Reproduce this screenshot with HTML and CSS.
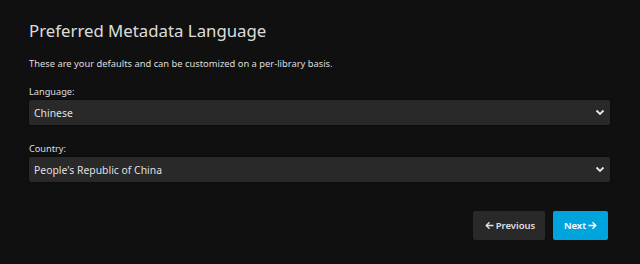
FILE: index.html
```html
<!DOCTYPE html>
<html lang="en">
<head>
  <meta charset="UTF-8" />
  <meta name="viewport" content="width=device-width, initial-scale=1.0"/>
  <title>Preferred Metadata Language</title>
  <link rel="stylesheet" href="styles.css">
</head>
<body>
  <!-- Wizard step: metadata language -->
  <div class="wizard-page">
    <h1 class="page-title">Preferred Metadata Language</h1>
    <p class="field-help">These are your defaults and can be customized on a per-library basis.</p>

    <div class="field">
      <label for="language">Language:</label>
      <div class="select-wrap">
        <select id="language" name="language">
          <option>Chinese</option>
          <option>English</option>
        </select>
        <span class="select-arrow">
          <svg width="10" height="7" viewBox="0 0 10 7"><path d="M1.5 1.5 5 5 8.5 1.5" fill="none" stroke="#e6e6e6" stroke-width="1.8"/></svg>
        </span>
      </div>
    </div>

    <div class="field">
      <label for="country">Country:</label>
      <div class="select-wrap">
        <select id="country" name="country">
          <option>People's Republic of China</option>
          <option>United States</option>
        </select>
        <span class="select-arrow">
          <svg width="10" height="7" viewBox="0 0 10 7"><path d="M1.5 1.5 5 5 8.5 1.5" fill="none" stroke="#e6e6e6" stroke-width="1.8"/></svg>
        </span>
      </div>
    </div>

    <div class="button-group">
      <button class="btn btn-prev">
        <svg width="9" height="9" viewBox="0 0 9 9"><path d="M8.5 4.5H1.2M4.5 1.2 1.2 4.5 4.5 7.8" fill="none" stroke="currentColor" stroke-width="1.3"/></svg>
        <span>Previous</span>
      </button>
      <button class="btn btn-next">
        <span>Next</span>
        <svg width="9" height="9" viewBox="0 0 9 9"><path d="M0.5 4.5H7.8M4.5 1.2 7.8 4.5 4.5 7.8" fill="none" stroke="currentColor" stroke-width="1.3"/></svg>
      </button>
    </div>
  </div>
</body>
</html>
```

FILE: styles.css
```css
body {
  font-family: 'Noto Sans', sans-serif;
  background-color: #101010;
  color: rgba(255, 255, 255, 0.87);
  margin: 0;
  padding: 0;
}

.wizard-page {
  padding: 19px 30px 0 29px;
}

.page-title {
  font-size: 16.8px;
  font-weight: 400;
  line-height: 24px;
  margin: 0;
}

.field-help {
  font-size: 9.35px;
  line-height: 14px;
  margin: 14px 0 0 0;
}

.field {
  margin-top: 14px;
}

.field + .field {
  margin-top: 17px;
}

label {
  display: block;
  font-size: 9.2px;
  line-height: 13px;
  margin-bottom: 2px;
}

.select-wrap {
  position: relative;
}

select {
  display: block;
  width: 100%;
  height: 25px;
  margin: 0;
  padding: 0 5px;
  font-family: inherit;
  font-size: 10.4px;
  color: rgba(255, 255, 255, 0.87);
  background-color: #292929;
  border: none;
  border-radius: 2px;
  appearance: none;
  -webkit-appearance: none;
  box-shadow: 0 0 2px rgba(0, 0, 0, 0.5);
}

.select-arrow {
  position: absolute;
  right: 5px;
  top: 9px;
  line-height: 0;
  pointer-events: none;
}

.button-group {
  display: flex;
  justify-content: flex-end;
  gap: 8px;
  margin-top: 29px;
  margin-right: 2px;
}

.btn {
  display: flex;
  align-items: center;
  justify-content: center;
  gap: 2px;
  height: 29px;
  padding: 0;
  font-family: inherit;
  font-size: 9.5px;
  font-weight: 600;
  color: #fff;
  border: none;
  border-radius: 2px;
  cursor: pointer;
}

.btn-prev {
  width: 72px;
  padding-left: 2px;
  background-color: #292929;
  color: rgba(255, 255, 255, 0.87);
}

.btn-next {
  width: 55px;
  background-color: #00a4dc;
}
```
